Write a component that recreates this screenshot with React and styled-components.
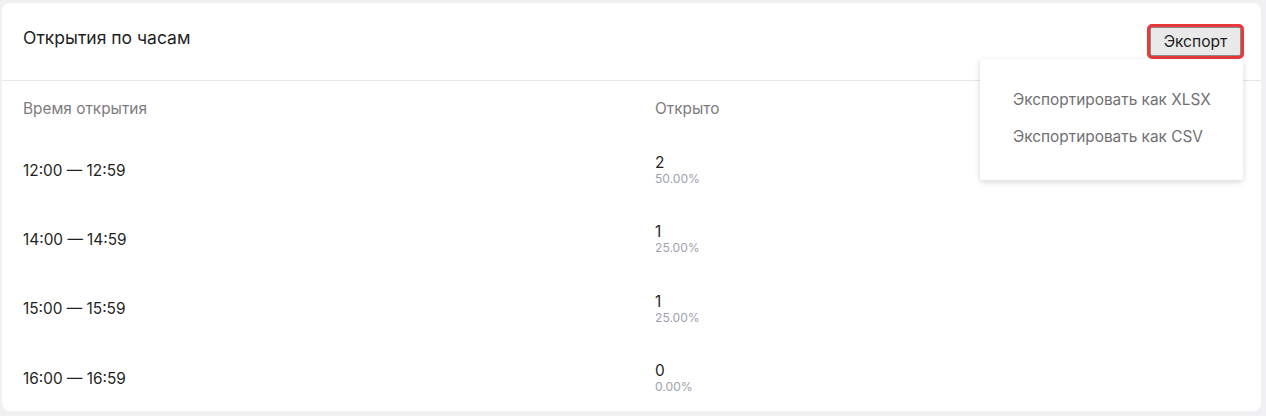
import React from "react"
import styled, { createGlobalStyle } from "styled-components"

const GlobalStyle = createGlobalStyle`
  html, body {
    margin: 0;
    padding: 0;
    background: #f1f1f3;
    font-family: Inter, "Noto Sans", Arial, sans-serif;
  }
`

const Page = styled.div`
  padding: 3px 5px 5px 2px;
`

const Card = styled.section`
  position: relative;
  background: #fff;
  border-radius: 8px;
  height: 408px;
  box-sizing: border-box;
  overflow: visible;
`

const Header = styled.header`
  display: flex;
  align-items: flex-start;
  justify-content: space-between;
  height: 78px;
  box-sizing: border-box;
  padding: 24px 20px 0 21px;
  border-bottom: 1px solid #e6e6e8;
`

const Title = styled.h2`
  margin: 0;
  font-size: 17.5px;
  font-weight: 400;
  line-height: 22px;
  color: #1f1f24;
`

const ExportWrap = styled.div`
  position: relative;
`

const ExportButton = styled.button`
  font-family: Inter, "Noto Sans", Arial, sans-serif;
  font-size: 15.6px;
  color: #1c1c22;
  background: #e9e9ea;
  border: 1px solid #8a8a8a;
  border-radius: 2px;
  width: 91px;
  height: 29px;
  padding: 0;
  outline: 3px solid #e8393c;
  outline-offset: 0;
  box-shadow: 0 0 0 1px #e8393c;
`

const Menu = styled.ul`
  position: absolute;
  top: 32px;
  right: -2px;
  width: 263px;
  height: 121px;
  box-sizing: border-box;
  margin: 0;
  padding: 22px 0 0;
  list-style: none;
  background: #fff;
  border-radius: 3px;
  box-shadow: 0 2px 6px rgba(0, 0, 0, 0.16);
  z-index: 2;
`

const MenuItem = styled.li`
  padding: 0 0 0 33px;
  height: 37px;
  line-height: 37px;
  font-size: 15.4px;
  color: #707074;
`

const Table = styled.div`
  display: grid;
  grid-template-columns: 632px 1fr;
  padding: 0 21px;
`

const HeadCell = styled.div`
  height: 53px;
  display: flex;
  align-items: center;
  font-size: 15.4px;
  color: #7c7c80;
  padding-top: 1px;
  box-sizing: border-box;
`

const Cell = styled.div`
  height: 69.3px;
  display: flex;
  flex-direction: column;
  justify-content: center;
  font-size: 15.4px;
  color: #1f1f24;
  padding-top: 3px;
  box-sizing: border-box;
`

const Count = styled.span`
  line-height: 17px;
`

const Percent = styled.span`
  font-size: 12.1px;
  line-height: 15px;
  color: #9ea2ae;
`

const rows = [
  { time: "12:00 — 12:59", count: 2, pct: "50.00%" },
  { time: "14:00 — 14:59", count: 1, pct: "25.00%" },
  { time: "15:00 — 15:59", count: 1, pct: "25.00%" },
  { time: "16:00 — 16:59", count: 0, pct: "0.00%" },
]

export default function App() {
  return (
    <Page>
      <GlobalStyle />
      <Card>
        <Header>
          <Title>Открытия по часам</Title>
          <ExportWrap>
            <ExportButton>Экспорт</ExportButton>
            <Menu>
              <MenuItem>Экспортировать как XLSX</MenuItem>
              <MenuItem>Экспортировать как CSV</MenuItem>
            </Menu>
          </ExportWrap>
        </Header>
        <Table>
          <HeadCell>Время открытия</HeadCell>
          <HeadCell>Открыто</HeadCell>
          {rows.map((r) => (
            <React.Fragment key={r.time}>
              <Cell>{r.time}</Cell>
              <Cell>
                <Count>{r.count}</Count>
                <Percent>{r.pct}</Percent>
              </Cell>
            </React.Fragment>
          ))}
        </Table>
      </Card>
    </Page>
  )
}
